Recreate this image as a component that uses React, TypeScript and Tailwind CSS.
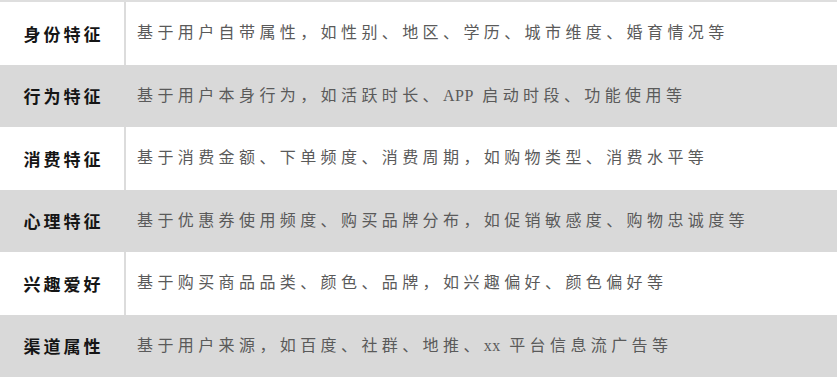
const rows = [
  { label: "身份特征", desc: ["基于用户自带属性，如性别、地区、学历、城市维度、婚育情况等"] },
  { label: "行为特征", desc: ["基于用户本身行为，如活跃时长、", "APP", " 启动时段、功能使用等"] },
  { label: "消费特征", desc: ["基于消费金额、下单频度、消费周期，如购物类型、消费水平等"] },
  { label: "心理特征", desc: ["基于优惠券使用频度、购买品牌分布，如促销敏感度、购物忠诚度等"] },
  { label: "兴趣爱好", desc: ["基于购买商品品类、颜色、品牌，如兴趣偏好、颜色偏好等"] },
  { label: "渠道属性", desc: ["基于用户来源，如百度、社群、地推、", "xx", " 平台信息流广告等"] },
];

export default function App() {
  return (
    <div
      className="flex h-[377px] w-[837px] flex-col border-t-2 border-[#dedede] bg-white"
      style={{ fontFamily: '"Noto Sans CJK SC", "Liberation Sans", sans-serif' }}
    >
      {rows.map((row, i) => {
        const shaded = i % 2 === 1;
        return (
          <div
            key={row.label}
            className={`flex flex-1 items-center ${shaded ? "bg-[#d9d9d9]" : "bg-white"}`}
          >
            <div
              className={`flex h-full w-[126px] shrink-0 items-center justify-center border-r-2 ${
                shaded ? "border-[#d9d9d9]" : "border-[#dcdcdc]"
              }`}
            >
              <span className="pl-[3px] text-[17px] font-bold tracking-[3px] text-[#151515]">
                {row.label}
              </span>
            </div>
            <div className="pl-[11px] font-['Liberation_Serif','Noto_Sans_CJK_SC',serif] text-[16px] tracking-[4.4px] text-[#5a5a5a]">
              {row.desc.map((part, j) =>
                j % 2 === 1 ? (
                  <span key={j} className="tracking-[0.5px]">
                    {part}
                  </span>
                ) : (
                  <span key={j}>{part}</span>
                )
              )}
            </div>
          </div>
        );
      })}
    </div>
  );
}
